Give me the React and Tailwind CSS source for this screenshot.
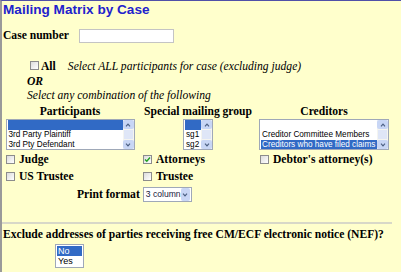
import React from 'react';

const serif = { fontFamily: '"Liberation Serif", "Times New Roman", serif' };
const sans = { fontFamily: '"Liberation Sans", Arial, sans-serif' };

function Box({ checked }) {
  return (
    <span className="inline-flex w-[9px] h-[9px] border border-[#8c8c8c] bg-gradient-to-br from-[#dcdcdc] to-white items-center justify-center shrink-0">
      {checked && (
        <svg width="7" height="7" viewBox="0 0 7 7">
          <path d="M1 3.5 L2.8 5.3 L6 1.5" fill="none" stroke="#21a121" strokeWidth="1.4" />
        </svg>
      )}
    </span>
  );
}

function Scrollbar() {
  return (
    <div className="w-[11px] flex flex-col bg-[#f4f4f0]">
      <div className="h-[9px] bg-[#c8d6f5] flex items-center justify-center rounded-[2px]">
        <svg width="6" height="4" viewBox="0 0 6 4"><path d="M1 3.3 L3 1.2 L5 3.3" fill="none" stroke="#4d6185" strokeWidth="1.2" /></svg>
      </div>
      <div className="flex-1 bg-[#dfe6f7] mx-[1px] my-[1px]" />
      <div className="h-[9px] bg-[#c8d6f5] flex items-center justify-center rounded-[2px]">
        <svg width="6" height="4" viewBox="0 0 6 4"><path d="M1 0.7 L3 2.8 L5 0.7" fill="none" stroke="#4d6185" strokeWidth="1.2" /></svg>
      </div>
    </div>
  );
}

function ListBox({ items, selected, width }) {
  return (
    <div className={`flex h-[31px] border border-[#9fa8b8] bg-white font-normal ${width}`} style={sans}>
      <div className="flex-1 flex flex-col overflow-hidden pl-[1px]">
        {items.map((it, i) => (
          <div
            key={i}
            className={`h-[10px] leading-[10px] text-[8.2px] pl-[1px] whitespace-nowrap ${i === selected ? 'bg-[#316ac5] text-white' : 'text-black'}`}
          >
            {it || '\u00a0'}
          </div>
        ))}
      </div>
      <Scrollbar />
    </div>
  );
}

export default function App() {
  return (
    <div className="w-[401px] h-[272px] bg-[#ffffcc] border-t border-[#5050a8] border-l-2 border-l-[#9a9a9a] overflow-hidden text-black" style={serif}>
      <h1 className="text-[13.6px] font-bold text-[#2222cc] pl-[1px] leading-[16px] pt-[1px]" style={sans}>
        Mailing Matrix by Case
      </h1>

      <div className="flex items-center mt-[11px] pl-[1px]">
        <span className="font-bold text-[11.6px] leading-[14px]">Case number</span>
        <span className="ml-[10px] w-[95px] h-[14px] bg-white border border-[#c4c4c4]" />
      </div>

      <div className="pl-[25px] mt-[17px] text-[11.6px] leading-[14px]">
        <div className="flex items-center">
          <span className="ml-[3px]"><Box /></span>
          <span className="font-bold ml-[2px]">All</span>
          <span className="italic ml-[12px]">Select ALL participants for case (excluding judge)</span>
        </div>
        <div className="font-bold italic mt-[1px]">OR</div>
        <div className="italic">Select any combination of the following</div>
      </div>

      <div className="flex mt-[2px] text-[11.6px] font-bold leading-[14px]">
        <div className="w-[136px] flex flex-col items-center">
          <span>Participants</span>
          <ListBox width="w-[129px]" items={['', '3rd Party Plaintiff', '3rd Pty Defendant']} selected={0} />
        </div>
        <div className="w-[120px] flex flex-col items-center">
          <span className="whitespace-nowrap">Special mailing group</span>
          <ListBox width="w-[30px]" items={['', 'sg1', 'sg2']} selected={0} />
        </div>
        <div className="w-[132px] flex flex-col items-center">
          <span>Creditors</span>
          <ListBox width="w-[130px]" items={['', 'Creditor Committee Members', 'Creditors who have filed claims']} selected={2} />
        </div>
      </div>

      <div className="grid grid-cols-[137px_117px_1fr] pl-[4px] mt-[1px] text-[11.6px] font-bold leading-[17px]">
        <div className="flex items-center gap-[4px]"><Box /><span>Judge</span></div>
        <div className="flex items-center gap-[4px]"><Box checked /><span>Attorneys</span></div>
        <div className="flex items-center gap-[4px]"><Box /><span>Debtor's attorney(s)</span></div>
        <div className="flex items-center gap-[4px]"><Box /><span>US Trustee</span></div>
        <div className="flex items-center gap-[4px]"><Box /><span>Trustee</span></div>
        <div />
      </div>

      <div className="flex items-center pl-[75px] mt-[1px] text-[11.6px] font-bold">
        <span>Print format</span>
        <span className="ml-[3px] h-[15px] w-[49px] bg-white border border-[#9fa8b8] flex items-center" style={sans}>
          <span className="text-[8.6px] font-normal pl-[2px] flex-1 text-[#202040] whitespace-nowrap">3 column</span>
          <span className="w-[11px] h-[13px] mr-[1px] bg-[#c8d6f5] flex items-center justify-center rounded-[2px]">
            <svg width="6" height="4" viewBox="0 0 6 4"><path d="M1 0.7 L3 2.8 L5 0.7" fill="none" stroke="#4d6185" strokeWidth="1.2" /></svg>
          </span>
        </span>
      </div>

      <div className="mt-[19px] mr-[9px] border-t-2 border-[#d8d8c8]" />

      <div className="pl-[1px] mt-[4px] text-[11.6px] font-bold leading-[14px] whitespace-nowrap">
        Exclude addresses of parties receiving free CM/ECF electronic notice (NEF)?
      </div>

      <div className="ml-[53px] mt-[2px] w-[29px] h-[24px] bg-white border border-[#9fa8b8] p-[1px] font-normal" style={sans}>
        <div className="h-[10px] leading-[10px] text-[9px] bg-[#316ac5] text-white pl-[1px]">No</div>
        <div className="h-[10px] leading-[10px] text-[9px] pl-[1px]">Yes</div>
      </div>
    </div>
  );
}
